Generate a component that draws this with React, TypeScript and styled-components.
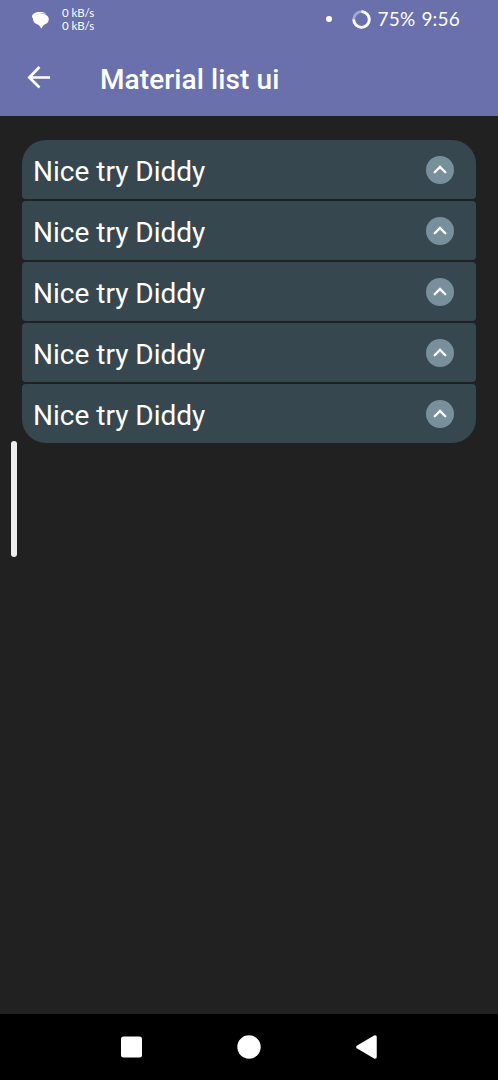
import React from "react";
import styled, { createGlobalStyle } from "styled-components";

const GlobalStyle = createGlobalStyle`
  * { box-sizing: border-box; }
  body { margin: 0; background: #212121; }
`;

const Screen = styled.div`
  position: relative;
  display: flex;
  flex-direction: column;
  width: 498px;
  height: 1080px;
  overflow: hidden;
  background: #212121;
  color: #fff;
  font-family: Roboto, sans-serif;
`;

const Header = styled.header`
  height: 116px;
  background: #6a70ab;
`;

const StatusBar = styled.div`
  display: flex;
  align-items: center;
  height: 38px;
  padding: 0 38px 0 31px;
  font-family: Lato, sans-serif;
`;

const Speeds = styled.div`
  display: flex;
  flex-direction: column;
  margin-left: 12px;
  font-size: 11.5px;
  line-height: 13px;
  letter-spacing: -0.1px;
`;

const StatusRight = styled.div`
  display: flex;
  align-items: center;
  margin-left: auto;
`;

const Dot = styled.span`
  width: 6px;
  height: 6px;
  margin-right: 20px;
  border-radius: 50%;
  background: #fff;
`;

const StatusText = styled.span<{ $gap: number }>`
  margin-left: ${(p) => p.$gap}px;
  font-size: 19px;
  line-height: 24px;
  letter-spacing: 0.2px;
  white-space: nowrap;
`;

const AppBar = styled.div`
  display: flex;
  align-items: center;
  height: 78px;
  padding-left: 27px;
`;

const Title = styled.h1`
  margin: 5px 0 0 49px;
  font-size: 28px;
  line-height: 34px;
  font-weight: 500;
  letter-spacing: 0.1px;
`;

const List = styled.main`
  display: flex;
  flex: 1;
  flex-direction: column;
  gap: 2px;
  padding: 24px 22px 0;
`;

const Row = styled.div`
  display: flex;
  align-items: center;
  justify-content: space-between;
  height: 59px;
  padding: 0 22px 0 11px;
  border-radius: 4px;
  background: #37474f;
  &:first-child { border-radius: 24px 24px 4px 4px; }
  &:last-child { border-radius: 4px 4px 24px 24px; }
`;

const RowLabel = styled.span`
  padding-top: 5px;
  font-size: 28px;
  line-height: 34px;
`;

const Badge = styled.span`
  display: flex;
  width: 28px;
  height: 28px;
  border-radius: 50%;
  background: #78909c;
`;

const EdgeHandle = styled.div`
  position: absolute;
  left: 11px;
  top: 441px;
  width: 6px;
  height: 116px;
  border-radius: 3px;
  background: #eee;
`;

const NavBar = styled.nav`
  display: flex;
  align-items: center;
  justify-content: space-between;
  height: 66px;
  padding: 0 120px;
  background: #000;
`;

const items = [1, 2, 3, 4, 5];

export default function App() {
  return (
    <>
      <GlobalStyle />
      <Screen>
        <Header>
          <StatusBar>
            <svg width="19" height="19" viewBox="0 0 19 19">
              <path d="M1 7C1 3.600 4.500 2 9 2c3 0 5 .6 6 1.700C9 2.800 3.300 4 2.600 8.500 1.600 8 1 7.600 1 7Z" fill="#fff" />
              <path d="M10 3.700c4.500 0 7.800 2 7.800 5.600 0 2.900-2.200 4.900-5 5.600L10.300 18.500 7.800 15C4.500 14 2 12 2 9c0-3.200 3.600-5.300 8-5.300Z" fill="#fff" />
            </svg>
            <Speeds>
              <span>0 kB/s</span>
              <span>0 kB/s</span>
            </Speeds>
            <StatusRight>
              <Dot />
              <svg width="19" height="19" viewBox="0 0 19 19" fill="none" stroke="#fff" strokeWidth="2.800">
                <circle cx="9.500" cy="9.500" r="7.800" opacity=".4" />
                <path d="M9.500 1.700a7.800 7.800 0 1 1-7.800 7.800" />
              </svg>
              <StatusText $gap={7}>75%</StatusText>
              <StatusText $gap={6}>9:56</StatusText>
            </StatusRight>
          </StatusBar>
          <AppBar>
            <svg width="24" height="24" viewBox="0 0 24 24" fill="none" stroke="#fff" strokeWidth="2.700">
              <path d="M23 12.500H3M12.500 2 2.300 12.500 12.500 22.500" />
            </svg>
            <Title>Material list ui</Title>
          </AppBar>
        </Header>
        <List>
          {items.map((id) => (
            <Row key={id}>
              <RowLabel>Nice try Diddy</RowLabel>
              <Badge>
                <svg width="28" height="28" viewBox="0 0 28 28" fill="none" stroke="#fff" strokeWidth="2.300" strokeLinecap="round">
                  <path d="m8.700 16.300 5.300-5.300 5.300 5.300" />
                </svg>
              </Badge>
            </Row>
          ))}
        </List>
        <NavBar>
          <svg width="22" height="22" viewBox="0 0 22 22">
            <rect x="1" y="0.500" width="21" height="21" rx="2.500" fill="#fff" />
          </svg>
          <svg width="24" height="24" viewBox="0 0 24 24">
            <circle cx="12" cy="12" r="11.700" fill="#fff" />
          </svg>
          <svg width="22" height="24" viewBox="0 0 22 24">
            <path d="M2 12 19 2v20Z" fill="#fff" stroke="#fff" strokeWidth="3.500" strokeLinejoin="round" />
          </svg>
        </NavBar>
        <EdgeHandle />
      </Screen>
    </>
  );
}
